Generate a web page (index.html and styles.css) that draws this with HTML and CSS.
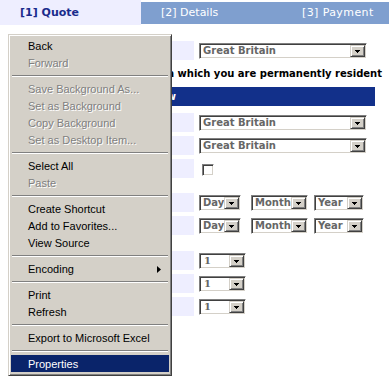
FILE: index.html
```html
<!DOCTYPE html>
<html lang="en">
<head>
    <meta charset="UTF-8">
    <meta name="viewport" content="width=device-width, initial-scale=1.0">
    <title>Quote</title>
    <link rel="stylesheet" href="styles.css">
</head>
<body>
    <div class="tabs">
        <div class="tab tab-active">[1] Quote</div>
        <div class="tab">[2] Details</div>
        <div class="tab tab-last">[3] Payment</div>
    </div>

    <div class="form">
        <div class="row">
            <div class="label"></div>
            <div class="field">
                <div class="combo combo-wide"><span class="combo-text">Great Britain</span><span class="combo-btn"><svg width="5" height="3" viewBox="0 0 5 3"><rect x="0" y="0" width="5" height="1"/><rect x="1" y="1" width="3" height="1"/><rect x="2" y="2" width="1" height="1"/></svg></span></div>
            </div>
        </div>
        <div class="note">Please select the country in which you are permanently resident</div>
        <div class="section">Main driver details follow</div>

        <div class="row row-after-section">
            <div class="label"></div>
            <div class="field">
                <div class="combo combo-wide"><span class="combo-text">Great Britain</span><span class="combo-btn"><svg width="5" height="3" viewBox="0 0 5 3"><rect x="0" y="0" width="5" height="1"/><rect x="1" y="1" width="3" height="1"/><rect x="2" y="2" width="1" height="1"/></svg></span></div>
            </div>
        </div>
        <div class="row">
            <div class="label"></div>
            <div class="field">
                <div class="combo combo-wide"><span class="combo-text">Great Britain</span><span class="combo-btn"><svg width="5" height="3" viewBox="0 0 5 3"><rect x="0" y="0" width="5" height="1"/><rect x="1" y="1" width="3" height="1"/><rect x="2" y="2" width="1" height="1"/></svg></span></div>
            </div>
        </div>
        <div class="row">
            <div class="label"></div>
            <div class="field field-check">
                <span class="checkbox"></span>
            </div>
        </div>
        <div class="spacer spacer-small"></div>

        <div class="row">
            <div class="label"></div>
            <div class="field">
                <div class="combo combo-day"><span class="combo-text">Day</span><span class="combo-btn"><svg width="5" height="3" viewBox="0 0 5 3"><rect x="0" y="0" width="5" height="1"/><rect x="1" y="1" width="3" height="1"/><rect x="2" y="2" width="1" height="1"/></svg></span></div>
                <div class="combo combo-month"><span class="combo-text">Month</span><span class="combo-btn"><svg width="5" height="3" viewBox="0 0 5 3"><rect x="0" y="0" width="5" height="1"/><rect x="1" y="1" width="3" height="1"/><rect x="2" y="2" width="1" height="1"/></svg></span></div>
                <div class="combo combo-year"><span class="combo-text">Year</span><span class="combo-btn"><svg width="5" height="3" viewBox="0 0 5 3"><rect x="0" y="0" width="5" height="1"/><rect x="1" y="1" width="3" height="1"/><rect x="2" y="2" width="1" height="1"/></svg></span></div>
            </div>
        </div>
        <div class="row">
            <div class="label"></div>
            <div class="field">
                <div class="combo combo-day"><span class="combo-text">Day</span><span class="combo-btn"><svg width="5" height="3" viewBox="0 0 5 3"><rect x="0" y="0" width="5" height="1"/><rect x="1" y="1" width="3" height="1"/><rect x="2" y="2" width="1" height="1"/></svg></span></div>
                <div class="combo combo-month"><span class="combo-text">Month</span><span class="combo-btn"><svg width="5" height="3" viewBox="0 0 5 3"><rect x="0" y="0" width="5" height="1"/><rect x="1" y="1" width="3" height="1"/><rect x="2" y="2" width="1" height="1"/></svg></span></div>
                <div class="combo combo-year"><span class="combo-text">Year</span><span class="combo-btn"><svg width="5" height="3" viewBox="0 0 5 3"><rect x="0" y="0" width="5" height="1"/><rect x="1" y="1" width="3" height="1"/><rect x="2" y="2" width="1" height="1"/></svg></span></div>
            </div>
        </div>
        <div class="spacer spacer-big"></div>

        <div class="row">
            <div class="label"></div>
            <div class="field">
                <div class="combo combo-num"><span class="combo-text combo-num-text">1</span><span class="combo-btn"><svg width="5" height="3" viewBox="0 0 5 3"><rect x="0" y="0" width="5" height="1"/><rect x="1" y="1" width="3" height="1"/><rect x="2" y="2" width="1" height="1"/></svg></span></div>
            </div>
        </div>
        <div class="row">
            <div class="label"></div>
            <div class="field">
                <div class="combo combo-num"><span class="combo-text combo-num-text">1</span><span class="combo-btn"><svg width="5" height="3" viewBox="0 0 5 3"><rect x="0" y="0" width="5" height="1"/><rect x="1" y="1" width="3" height="1"/><rect x="2" y="2" width="1" height="1"/></svg></span></div>
            </div>
        </div>
        <div class="row">
            <div class="label"></div>
            <div class="field">
                <div class="combo combo-num"><span class="combo-text combo-num-text">1</span><span class="combo-btn"><svg width="5" height="3" viewBox="0 0 5 3"><rect x="0" y="0" width="5" height="1"/><rect x="1" y="1" width="3" height="1"/><rect x="2" y="2" width="1" height="1"/></svg></span></div>
            </div>
        </div>
    </div>

    <!-- browser context menu, open over the form -->
    <div class="context-menu">
        <div class="menu-item">Back</div>
        <div class="menu-item disabled">Forward</div>
        <div class="menu-sep"></div>
        <div class="menu-item disabled">Save Background As...</div>
        <div class="menu-item disabled">Set as Background</div>
        <div class="menu-item disabled">Copy Background</div>
        <div class="menu-item disabled">Set as Desktop Item...</div>
        <div class="menu-sep"></div>
        <div class="menu-item">Select All</div>
        <div class="menu-item disabled">Paste</div>
        <div class="menu-sep"></div>
        <div class="menu-item">Create Shortcut</div>
        <div class="menu-item">Add to Favorites...</div>
        <div class="menu-item">View Source</div>
        <div class="menu-sep"></div>
        <div class="menu-item has-sub">Encoding<svg class="sub-arrow" width="4" height="7" viewBox="0 0 4 7"><polygon points="0,0 4,3.5 0,7"/></svg></div>
        <div class="menu-sep"></div>
        <div class="menu-item">Print</div>
        <div class="menu-item">Refresh</div>
        <div class="menu-sep"></div>
        <div class="menu-item">Export to Microsoft Excel</div>
        <div class="menu-sep"></div>
        <div class="menu-item selected">Properties</div>
    </div>
</body>
</html>
```

FILE: styles.css
```css
html, body {
    margin: 0;
    overflow: hidden;
    background: #fff;
}
body {
    font-family: "DejaVu Sans", Verdana, sans-serif;
    width: 440px;
}

/* wizard tabs */
.tabs {
    display: flex;
    height: 25px;
}
.tab {
    flex: 0 0 141px;
    box-sizing: border-box;
    margin: 2px 0 1px;
    padding-left: 20px;
    background-color: #7f9fcf;
    color: #fff;
    font-size: 11px;
    line-height: 22px;
}
.tab-last {
    letter-spacing: 0.4px;
}
.tab-active {
    margin: 0;
    background-color: #eeeeff;
    color: #1a2b8c;
    font-weight: bold;
    line-height: 26px;
}

/* form */
.form {
    width: 372px;
    margin: 16px 0 0 10px;
    display: flex;
    flex-direction: column;
    gap: 4px;
}
.row {
    display: flex;
    gap: 5px;
    height: 19px;
}
.row-after-section {
    margin-top: 3px;
}
.label {
    flex: 0 0 184px;
    background-color: #eeeeff;
}
.field {
    display: flex;
    align-items: flex-start;
    padding-top: 2px;
}
.field-check {
    padding: 5px 0 0 3px;
}
.note {
    height: 19px;
    font-size: 10px;
    font-weight: bold;
    line-height: 19px;
    text-align: right;
    white-space: nowrap;
}
.section {
    height: 19px;
    margin-right: 7px;
    padding-left: 22px;
    background-color: #12308a;
    color: #fff;
    font-size: 10px;
    font-weight: bold;
    line-height: 19px;
}
.spacer-small { height: 7px; }
.spacer-big { height: 8px; }

/* win classic combo box */
.combo {
    display: flex;
    box-sizing: border-box;
    height: 16px;
    padding: 1px;
    background: #fff;
    border: 1px solid;
    border-color: #808080 #fff #fff #808080;
    box-shadow: inset 1px 1px #404040, inset -1px -1px #d4d0c8;
}
.combo-text {
    flex: 1;
    overflow: hidden;
    padding-left: 2px;
    color: #666;
    font-size: 10px;
    font-weight: bold;
    line-height: 12px;
    white-space: nowrap;
}
.combo-num-text {
    font-family: "DejaVu Serif", serif;
    padding-left: 3px;
}
.combo-btn {
    flex: 0 0 15px;
    display: flex;
    align-items: center;
    justify-content: center;
    box-sizing: border-box;
    background: #d4d0c8;
    border: 1px solid;
    border-color: #d4d0c8 #404040 #404040 #d4d0c8;
    box-shadow: inset 1px 1px #fff, inset -1px -1px #808080;
}
.combo-btn svg {
    shape-rendering: crispEdges;
}
.combo-wide { width: 168px; }
.combo-day { width: 42px; margin-right: 10px; }
.combo-month { width: 57px; margin-right: 6px; }
.combo-year { width: 50px; }
.combo-num { width: 47px; }

.checkbox {
    width: 12px;
    height: 12px;
    box-sizing: border-box;
    background: #fff;
    border: 1px solid;
    border-color: #808080 #fff #fff #808080;
    box-shadow: inset 1px 1px #404040, inset -1px -1px #d4d0c8;
}

/* context menu */
.context-menu {
    position: absolute;
    left: 8px;
    top: 34px;
    width: 164px;
    box-sizing: border-box;
    padding: 2px 2px 3px;
    background: #d4d0c8;
    border: 1px solid;
    border-color: #d4d0c8 #404040 #404040 #d4d0c8;
    box-shadow: inset 1px 1px #fff, inset -1px -1px #808080;
    font-family: "Liberation Sans", Arial, sans-serif;
    font-size: 11px;
}
.menu-item {
    display: flex;
    align-items: flex-start;
    box-sizing: border-box;
    height: 17px;
    padding: 1px 8px 0 17px;
    line-height: 16px;
    color: #000;
}
.menu-item.disabled {
    color: #808080;
    text-shadow: 1px 1px 0 #fff;
}
.menu-item.selected {
    background: #0a246a;
    color: #fff;
}
.sub-arrow {
    margin: 5px 0 0 auto;
}
.menu-sep {
    height: 9px;
    box-sizing: border-box;
    margin: 0 1px;
    padding-top: 4px;
}
.menu-sep::before {
    content: "";
    display: block;
    border-top: 1px solid #808080;
    border-bottom: 1px solid #fff;
}
```
